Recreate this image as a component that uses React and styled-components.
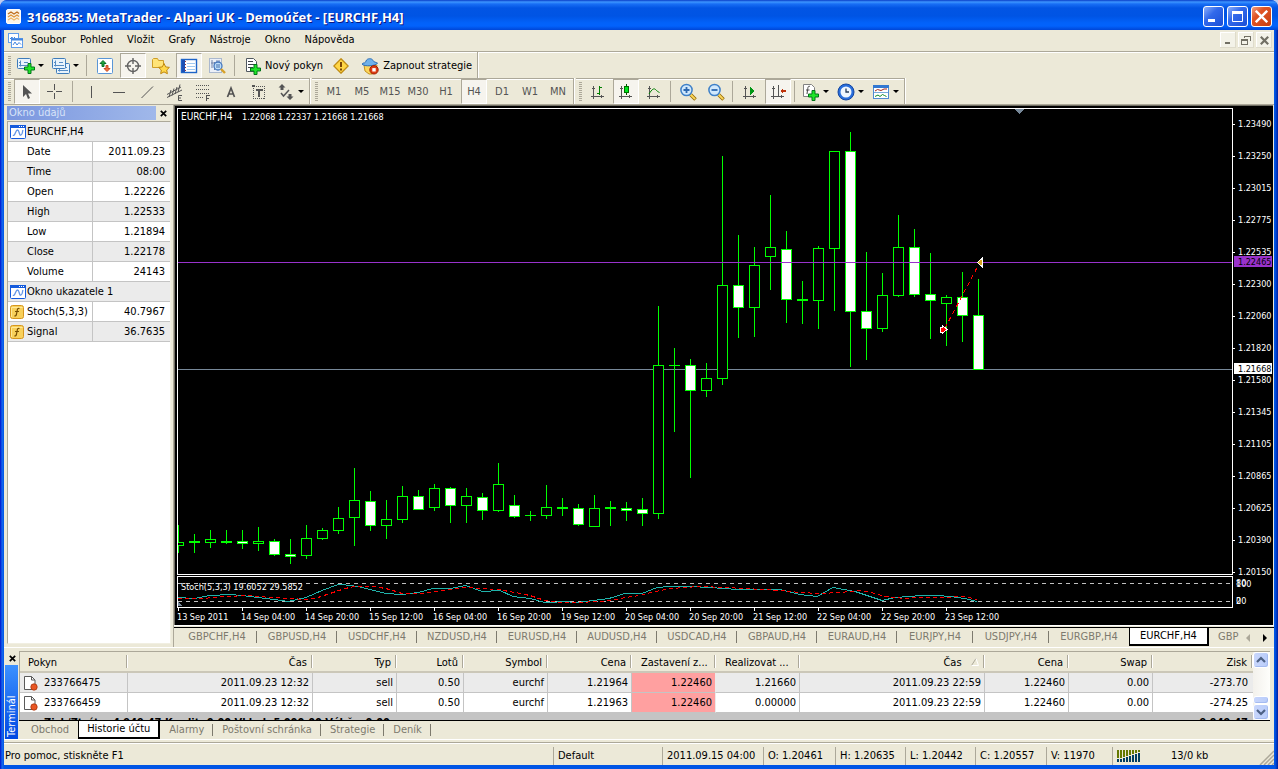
import React from 'react';
import styled, { createGlobalStyle, css } from 'styled-components';

const FONT = '"DejaVu Sans Condensed", "DejaVu Sans", "Noto Sans", sans-serif';
const FACE = 'rgb(236, 233, 216)';
const SHADOW = 'rgb(172, 168, 153)';
const DARK = 'rgb(113, 111, 100)';

const GlobalStyle = createGlobalStyle`
  * { box-sizing: border-box; }
  body { margin: 0; background: rgb(190, 204, 240); }
  button { font: inherit; color: inherit; padding: 0; margin: 0; border: 0; background: none; }
`;

// --- Window frame ---
const Window = styled.div`
  display: flex;
  flex-direction: column;
  height: 100vh;
  overflow: hidden;
  font: 11px/14px ${FONT};
  color: rgb(0, 0, 0);
  white-space: nowrap;
  background: linear-gradient(90deg, rgb(0, 25, 207) 0, rgb(8, 49, 217) 1px, rgb(22, 106, 238) 2px, rgb(0, 85, 229) 4px, rgb(0, 85, 229) calc(100% - 3px), rgb(0, 30, 160) 100%);
  border-radius: 7px 7px 0 0;
`;

const TitleBar = styled.header`
  display: flex;
  align-items: center;
  gap: 6px;
  flex: none;
  height: 30px;
  padding: 3px 6px 0;
  border-radius: 7px 7px 0 0;
  background: linear-gradient(180deg,
    rgb(9, 61, 200) 0, rgb(61, 149, 255) 2px, rgb(24, 110, 245) 4px, rgb(2, 85, 228) 8px,
    rgb(0, 84, 228) 16px, rgb(2, 98, 250) 23px, rgb(2, 98, 252) 26px, rgb(0, 70, 215) 30px);
`;

const Title = styled.h1`
  flex: 1;
  margin: 0;
  font: bold 13px/18px "Open Sans", ${FONT};
  color: rgb(255, 255, 255);
  text-shadow: 1px 1px 0 rgb(10, 24, 131);
`;

const CaptionButtons = styled.div`
  display: flex;
  gap: 3px;
`;

const CaptionButton = styled.button`
  display: grid;
  place-items: center;
  width: 21px;
  height: 21px;
  border: 1px solid rgb(255, 255, 255);
  border-radius: 3px;
  background: ${({ $close }) => $close
    ? 'linear-gradient(135deg, rgb(240, 160, 130) 0%, rgb(224, 84, 36) 35%, rgb(200, 62, 16) 100%)'
    : 'linear-gradient(135deg, rgb(140, 175, 250) 0%, rgb(50, 105, 235) 40%, rgb(26, 78, 214) 100%)'};
`;

const Client = styled.div`
  display: flex;
  flex-direction: column;
  flex: 1;
  min-height: 0;
  margin: 0 4px 4px;
  background: ${FACE};
`;

// --- Menu and toolbars ---
const MenuBar = styled.nav`
  display: flex;
  align-items: center;
  flex: none;
  gap: 14px;
  height: 22px;
  padding: 0 2px 1px 4px;
  border-bottom: 1px solid ${SHADOW};
  box-shadow: 0 1px 0 rgb(255, 255, 255);
  svg { margin-right: -6px; }
`;

const MdiButtons = styled.div`
  display: flex;
  gap: 2px;
  margin-left: auto;
`;

const MdiButton = styled.button`
  display: grid;
  place-items: center;
  width: 16px;
  height: 16px;
  background: rgb(243, 242, 232);
  box-shadow: inset -1px -1px 0 rgb(222, 219, 203), inset 1px 1px 0 rgb(255, 255, 255);
  svg { margin: 0; }
`;

const ToolRow = styled.div`
  display: flex;
  flex: none;
  height: ${({ $last }) => ($last ? '27px' : '26px')};
  border-bottom: ${({ $last }) => ($last ? `1px solid ${SHADOW}` : 0)};
`;

const Band = styled.div`
  display: flex;
  align-items: center;
  padding: 1px 1px 0 3px;
  border-right: 1px solid ${SHADOW};
  box-shadow: 1px 0 0 rgb(255, 255, 255);
  margin-right: 2px;
  &:first-child { padding-left: 4px; }
  ${({ $lined }) => $lined && css`
    padding-top: 0;
    border-top: 1px solid ${SHADOW};
    box-shadow: 1px 0 0 rgb(255, 255, 255), inset 0 1px 0 rgb(255, 255, 255);
  `}
`;

const Grip = styled.span`
  width: 3px;
  height: 19px;
  margin-right: 2px;
  background: repeating-linear-gradient(180deg, ${SHADOW} 0 1px, transparent 1px 2px);
`;

const Separator = styled.span`
  width: 1px;
  height: 21px;
  margin: ${({ $wide }) => ($wide ? '0 4px 0 3px' : '0 3px 0 2px')};
  background: ${SHADOW};
`;

const Tool = styled.button`
  display: flex;
  align-items: center;
  justify-content: ${({ $drop }) => ($drop ? 'flex-start' : 'center')};
  gap: 4px;
  height: 25px;
  width: ${({ $drop, $wide }) => ($wide ? 'auto' : $drop ? '35px' : '26px')};
  margin: ${({ $drop, $wide }) => ($drop || $wide ? '0' : '0 1px')};
  padding: ${({ $wide, $drop }) => ($wide ? '0 4px 0 6px' : $drop ? '0 0 0 4px' : '0')};
  color: ${({ $wide }) => ($wide ? 'rgb(0, 0, 0)' : 'rgb(84, 84, 84)')};
  ${({ $pressed }) => $pressed && css`
    border: 1px solid;
    border-color: ${SHADOW} rgb(255, 255, 255) rgb(255, 255, 255) ${SHADOW};
    background: rgb(246, 244, 238);
  `}
`;

const Caret = styled.span`
  border: 3px solid transparent;
  border-top-color: rgb(0, 0, 0);
  border-bottom: 0;
  margin-left: -1px;
`;

// --- Data window ---
const Main = styled.main`
  display: flex;
  flex: 1;
  min-height: 0;
`;

const DataWindow = styled.section`
  display: flex;
  flex-direction: column;
  flex: none;
  width: 170px;
  padding: 1px 2px 3px 3px;
  border-right: 1px solid ${SHADOW};
`;

const PaneTitle = styled.div`
  display: flex;
  align-items: center;
  height: 14px;
  margin-bottom: 1px;
  h2 {
    flex: 1;
    margin: 0;
    padding-left: 2px;
    font: 11px/14px ${FONT};
    color: rgb(216, 228, 248);
    background: linear-gradient(90deg, rgb(122, 150, 223), rgb(160, 184, 234));
  }
`;

const CloseButton = styled.button`
  display: grid;
  place-items: center;
  width: 15px;
  height: 14px;
`;

const DataList = styled.div`
  flex: 1;
  min-height: 0;
  background: rgb(255, 255, 255);
  border: 1px solid;
  border-color: ${SHADOW} rgb(241, 239, 226) rgb(241, 239, 226) ${SHADOW};
`;

const DataTable = styled.table`
  width: 100%;
  border-collapse: separate;
  border-spacing: 0;
  table-layout: fixed;
  tr { height: 20px; background: rgb(255, 255, 255); }
  tr.shade { background: rgb(235, 235, 235); }
  th, td { height: 20px; padding: 0; border-bottom: 1px solid rgb(196, 196, 196); font-weight: normal; }
  th { text-align: left; padding-left: 19px; border-right: 1px solid rgb(196, 196, 196); }
  td { text-align: right; padding-right: 5px; }
  th.iconed { padding-left: 2px; }
  th[colspan] { border-right: 0; }
`;

const Labelled = styled.span`
  display: flex;
  align-items: center;
  gap: ${({ $gap }) => $gap || 1}px;
`;

// --- Chart ---
const ChartColumn = styled.section`
  display: flex;
  flex-direction: column;
  flex: 1;
  min-width: 0;
`;

const ChartArea = styled.div`
  display: grid;
  grid-template-columns: minmax(0, 1fr) 40px;
  grid-template-rows: minmax(0, 1fr) 32px 16px;
  flex: 1;
  min-height: 0;
  margin-right: 1px;
  padding: 2px 0 0 2px;
  row-gap: 1px;
  background: rgb(0, 0, 0);
  border-top: 1px solid ${DARK};
  border-left: 1px solid ${DARK};
  svg { display: block; width: 100%; height: 100%; overflow: hidden; }
  text { font: 9px ${FONT}; fill: rgb(255, 255, 255); }
  text.symbol { font-size: 10px; }
  text.badge { fill: rgb(0, 0, 0); }
`;

const Pane = styled.div`
  min-width: 0;
  min-height: 0;
  border: 1px solid rgb(255, 255, 255);
`;

const AxisCell = styled.div`
  min-width: 0;
  min-height: 0;
  grid-column: ${({ $span }) => ($span ? '1 / 3' : 'auto')};
  && svg { overflow: visible; }
`;

const TabStrip = styled.div`
  display: flex;
  flex: none;
  height: 19px;
  padding-left: 3px;
  border-top: 1px solid rgb(0, 0, 0);
  overflow: hidden;
`;

const ChartTabs = styled.div`
  display: flex;
  flex: none;
  height: 22px;
  padding-top: 1px;
  border-top: 1px solid rgb(255, 255, 255);
  background: ${FACE};
  ${TabStrip} { flex: 1; height: 20px; }
`;

const Tab = styled.button`
  position: relative;
  flex: none;
  width: ${({ $w }) => ($w ? `${$w}px` : 'auto')};
  height: 18px;
  padding: ${({ $w }) => ($w ? '0' : '0 9px')};
  color: rgb(125, 122, 110);
  ${({ $active, $line }) => !$active && $line && css`
    &::after {
      content: '';
      position: absolute;
      right: 0;
      top: 3px;
      width: 1px;
      height: 12px;
      background: rgb(125, 122, 110);
    }
  `}
  ${({ $active, $w }) => $active && css`
    color: rgb(0, 0, 0);
    padding: ${$w ? '0' : '0 8px'};
    background: rgb(255, 255, 255);
    border: 1px solid rgb(0, 0, 0);
    border-top: 0;
    border-right-width: 2px;
    border-bottom-width: 2px;
  `}
`;

const TabScroll = styled.div`
  display: flex;
  align-items: center;
  gap: 12px;
  width: 32px;
  padding-left: 4px;
  border-top: 1px solid rgb(0, 0, 0);
  button { display: flex; width: 5px; }
`;

// --- Terminal ---
const Terminal = styled.section`
  display: flex;
  flex: none;
  height: 96px;
  padding: 3px 4px 3px 0;
  border-top: 1px solid rgb(255, 255, 255);
  border-bottom: 1px solid ${SHADOW};
  box-shadow: inset 0 -2px 0 ${FACE}, inset 0 -3px 0 rgb(255, 255, 255);
`;

const SideStrip = styled.div`
  display: flex;
  flex-direction: column;
  width: 15px;
  padding-left: 1px;
  h2 {
    flex: 1;
    margin: 0;
    width: 13px;
    padding-top: 2px;
    font: 11px/13px ${FONT};
    color: rgb(255, 255, 255);
    writing-mode: vertical-rl;
    transform: rotate(180deg);
    background: linear-gradient(0deg, rgb(60, 145, 255), rgb(0, 72, 226));
  }
`;

const TerminalBody = styled.div`
  display: flex;
  flex-direction: column;
  flex: 1;
  min-width: 0;
`;

const ListRow = styled.div`
  display: flex;
  flex: 1;
  min-height: 0;
  overflow: hidden;
  border-top: 1px solid ${SHADOW};
  border-left: 1px solid ${SHADOW};
`;

const TableClip = styled.div`
  flex: 1;
  min-width: 0;
  overflow: hidden;
`;

const OrderTable = styled.table`
  width: 100%;
  table-layout: fixed;
  border-collapse: separate;
  border-spacing: 0;
  th, td { font-weight: normal; text-align: right; padding: 0 3px 0 0; overflow: hidden; }
  th {
    height: 21px;
    padding: 2px 6px 0 0;
    border-bottom: 2px solid rgb(203, 199, 184);
    background: linear-gradient(${SHADOW}, ${SHADOW}) right 1px top 3px / 1px 13px no-repeat,
      linear-gradient(white, white) right 0 top 3px / 1px 13px no-repeat, ${FACE};
  }
  td { height: 20px; border-bottom: 1px solid rgb(196, 196, 196); border-right: 1px solid rgb(196, 196, 196); }
  th:first-child { text-align: left; padding-left: 8px; }
  th.clipped { text-align: left; padding: 2px 0 0 9px; }
  td:first-child { text-align: left; padding-left: 3px; }
  td:last-child { border-right: 0; padding-right: 5px; }
  tbody tr td { background: rgb(255, 255, 255); }
  tbody tr.shade td { background: rgb(235, 235, 235); }
  tbody tr td.stop { background: rgb(255, 160, 160); border-right-color: rgb(235, 235, 235); }
  tbody tr.total td { background: rgb(196, 196, 196); font-weight: bold; border-right: 0; }
`;

const ScrollBar = styled.div`
  display: flex;
  flex-direction: column;
  width: 17px;
  padding-right: 1px;
  background: linear-gradient(90deg, rgb(243, 241, 236), rgb(254, 254, 251));
`;

const ScrollButton = styled.button`
  display: grid;
  place-items: center;
  flex: none;
  height: ${({ $thumb }) => ($thumb ? '8px' : '16px')};
  margin-top: ${({ $push }) => ($push ? 'auto' : '0')};
  border: 1px solid rgb(255, 255, 255);
  border-radius: 3px;
  background: linear-gradient(90deg, rgb(200, 214, 251), rgb(185, 204, 250));
  box-shadow: inset -1px -1px 0 rgb(165, 187, 240);
`;

const StatusBar = styled.footer`
  display: grid;
  grid-template-columns: minmax(0, 1fr) 109px 101px 72px 70px 70px 71px 66px 162px;
  flex: none;
  height: 22px;
  padding-top: 3px;
  border-top: 1px solid rgb(255, 255, 255);
`;

const StatusCell = styled.div`
  display: flex;
  align-items: center;
  gap: 31px;
  height: 18px;
  padding-left: ${({ $first }) => ($first ? '1px' : '4px')};
  border-left: ${({ $first }) => ($first ? '0' : `1px solid ${SHADOW}`)};
  overflow: hidden;
  svg:last-child:not(:first-child) { margin-left: auto; align-self: flex-end; }
`;

// --- Icons ---
const Svg = ({ w = 18, h = 18, crisp, children }) => (
  <svg width={w} height={h} viewBox={`0 0 ${w} ${h}`} fill="none" shapeRendering={crisp ? 'crispEdges' : undefined} aria-hidden="true">
    {children}
  </svg>
);

const Plus = ({ x, y }) => (
  <path transform={`translate(${x} ${y})`} d="M4 .5h3V4h3.500v3H7v3.500H4V7H.5V4H4z" fill="rgb(30, 230, 40)" stroke="rgb(0, 118, 24)" />
);

const AppIcon = () => (
  <Svg w={15} h={15}>
    <rect x=".5" y=".5" width="14" height="14" rx="1.5" fill="rgb(250, 244, 232)" stroke="rgb(255, 255, 255)" />
    {[4, 7, 10].map((y, i) => (
      <path key={y} d={`M2 ${y + 1}l3-2 3 2 3-2 2 1.500`} stroke={['rgb(190, 110, 30)', 'rgb(222, 150, 60)', 'rgb(236, 184, 110)'][i]} strokeWidth="1.400" />
    ))}
  </Svg>
);

const MdiIcon = () => (
  <Svg w={15} h={15}>
    <rect x=".5" y=".5" width="10" height="9" fill="white" stroke="rgb(96, 156, 234)" />
    <path d="M2 6l2-2 1 2 2-2" stroke="rgb(66, 133, 224)" />
    <rect x="3.500" y="5.500" width="11" height="9" fill="white" stroke="rgb(96, 156, 234)" />
    <path d="M3 6.500h12" stroke="rgb(66, 133, 224)" strokeWidth="2" />
    <path d="M5 12l2-3 2 3 2-2.500 2 2" stroke="rgb(66, 133, 224)" />
  </Svg>
);

const WindowIcon = () => (
  <Svg w={16} h={14}>
    <rect x=".5" y=".5" width="15" height="13" rx="1" fill="white" stroke="rgb(20, 90, 220)" />
    <path d="M0 1.500h16" stroke="rgb(20, 90, 220)" strokeWidth="3" />
    <path d="M9 1.500h1m1 0h1m1 0h1" stroke="white" />
    <path d="M3 10c2 2 2.500-5 4.500-5s1.500 6 3.500 5 1-3 2-5" stroke="rgb(100, 150, 230)" strokeWidth="1.300" />
  </Svg>
);

const FunctionIcon = () => (
  <Svg w={14} h={14}>
    <rect x=".5" y=".5" width="13" height="13" rx="2" fill="rgb(248, 208, 90)" stroke="rgb(214, 150, 30)" />
    <path d="M1.500 12V2.500h11" stroke="rgb(255, 232, 150)" />
    <path d="M9.500 3.500c-1.500-.7-2 .3-2.300 2l-.8 4c-.3 1.300-.9 1.700-2 1.200M5 6.500h4" stroke="rgb(120, 78, 0)" strokeWidth="1.200" />
  </Svg>
);

const ChartFrame = ({ x = 0, y = 0 }) => (
  <g transform={`translate(${x} ${y})`}>
    <rect x=".5" y=".5" width="13" height="10" rx="1" fill="rgb(232, 243, 252)" stroke="rgb(62, 124, 186)" />
    <path d="M3.500 2.500v6M2 4.500h2m-2 3h10M7 4.500h4" stroke="rgb(86, 140, 196)" />
  </g>
);

const NewChartIcon = () => <Svg><ChartFrame x={0} y={1} /><Plus x={7} y={6} /></Svg>;
const ProfilesIcon = () => <Svg><ChartFrame x={4} y={6} /><ChartFrame x={0} y={1} /></Svg>;

const MarketWatchIcon = () => (
  <Svg>
    <rect x="1.500" y="1.500" width="15" height="15" rx="1" fill="white" stroke="rgb(90, 150, 214)" />
    <path d="M7 3.500l3 3h-2v3h-2v-3h-2z" fill="rgb(30, 165, 60)" stroke="rgb(10, 110, 40)" />
    <path d="M11 14.500l-3-3h2v-3h2v3h2z" fill="rgb(240, 110, 60)" stroke="rgb(200, 76, 36)" />
  </Svg>
);

const CrosshairIcon = () => (
  <Svg>
    <circle cx="9" cy="9" r="5.500" stroke="rgb(98, 98, 98)" strokeWidth="1.400" />
    <path d="M9 1v6M9 11v6M1 9h6M11 9h6" stroke="rgb(98, 98, 98)" strokeWidth="1.400" />
  </Svg>
);

const Star = () => (
  <path d="M12 6.500l1.700 3.400 3.700.5-2.700 2.600.7 3.700-3.400-1.800-3.300 1.800.6-3.700-2.700-2.600 3.700-.5z" fill="rgb(255, 216, 74)" stroke="rgb(190, 134, 14)" />
);
const NavigatorIcon = () => (
  <Svg>
    <path d="M.5 10.500V2.500l1-1h4l1 2h5v7z" fill="rgb(255, 228, 120)" stroke="rgb(206, 158, 40)" />
    <Star />
  </Svg>
);

const DataWindowIcon = () => (
  <Svg>
    <rect x="1.500" y="2.500" width="15" height="13" fill="white" stroke="rgb(30, 100, 200)" strokeWidth="1.400" />
    <path d="M3.500 3v12" stroke="rgb(30, 80, 180)" strokeWidth="3" />
    <path d="M7 6.500h8M7 9.500h8M7 12.500h8" stroke="rgb(160, 200, 240)" />
    <path d="M5.500 4v10" stroke="rgb(150, 50, 60)" strokeDasharray="1 2" />
  </Svg>
);

const TesterIcon = () => (
  <Svg>
    <rect x="1.500" y="1.500" width="12" height="14" fill="rgb(236, 240, 248)" stroke="rgb(170, 184, 206)" />
    <path d="M4 3v8M6.500 5v8M3 6h3m2-2h4" stroke="rgb(110, 130, 170)" />
    <circle cx="10" cy="9" r="4" fill="rgb(190, 222, 250)" stroke="rgb(70, 120, 190)" strokeWidth="1.300" />
    <path d="M9 7v4M11 7v4" stroke="rgb(70, 110, 170)" />
    <path d="M13 12l4 4" stroke="rgb(214, 160, 40)" strokeWidth="2.400" />
  </Svg>
);

const NewOrderIcon = () => (
  <Svg w={16}>
    <path d="M1.500 1.500h7l3 3v10h-10z" fill="white" stroke="rgb(80, 88, 96)" />
    <path d="M3 4.500h5M3 7.500h7M3 10.500h5" stroke="rgb(60, 66, 74)" />
    <Plus x={5} y={7} />
  </Svg>
);

const AlertIcon = () => (
  <Svg w={16} h={16}>
    <path d="M8 .8L15.200 8 8 15.200.8 8z" fill="rgb(255, 214, 70)" stroke="rgb(192, 140, 20)" strokeWidth="1.300" />
    <path d="M8 4v5M8 10.500v2" stroke="rgb(110, 56, 0)" strokeWidth="1.800" />
  </Svg>
);

const ExpertIcon = () => (
  <Svg>
    <path d="M3 8l1 6 4 3h3l4-3 1-6z" fill="rgb(252, 214, 92)" stroke="rgb(196, 146, 30)" />
    <path d="M1 7c2-2 3 0 4-3s6-3 7-.5c.8 2 3 1.500 4.500 2.500-1 3-13.500 4-15.500 1z" fill="rgb(110, 176, 234)" stroke="rgb(44, 110, 184)" />
    <circle cx="13" cy="12.800" r="4.200" fill="rgb(222, 60, 20)" stroke="rgb(160, 30, 0)" />
    <rect x="11.300" y="11.100" width="3.400" height="3.400" fill="white" />
  </Svg>
);

const INK = 'rgb(84, 84, 84)';
const CursorIcon = () => <Svg><path d="M5 2v12l3-3 2 5 2-1-2-4.500h4z" fill={INK} /></Svg>;
const CrossIcon = () => <Svg crisp><path d="M8.500 1v6m0 3v6M1 8.500h6m3 0h6" stroke={INK} /></Svg>;
const VLineIcon = () => <Svg crisp><path d="M9.500 3v12" stroke={INK} /></Svg>;
const HLineIcon = () => <Svg crisp><path d="M3 9.500h12" stroke={INK} /></Svg>;
const TrendIcon = () => <Svg><path d="M3.500 15L15 3.500" stroke={INK} /></Svg>;
const ChannelIcon = () => (
  <Svg>
    <path d="M1 11.500L15 4M1 14.500L16 7M5 7l-2 7M8 5.500l-2 7M11 4l-2 7M14 1.500l-2 7.500" stroke={INK} />
    <path d="M16 12.500h-3.500v5H16M12.500 15H15" stroke={INK} />
  </Svg>
);
const FiboIcon = () => (
  <Svg crisp>
    <path d="M2 2.500h14M2 6.500h14M2 10.500h14M2 14.500h8" stroke={INK} strokeDasharray="1 1" />
    <path d="M16 12.500h-3.500V18M13 15.500h2" stroke={INK} />
  </Svg>
);
const LetterIcon = () => <Svg><path d="M5.500 14L9 5l3.500 9M6.500 11h5" stroke={INK} strokeWidth="1.700" /></Svg>;
const TextBoxIcon = () => (
  <Svg crisp>
    <rect x="3.500" y="3.500" width="11" height="12" stroke={INK} strokeDasharray="1 1" />
    <path d="M6 7h7M9 6v8" stroke={INK} strokeWidth="2" />
    <path d="M2 2h3v2H2z" fill={INK} />
  </Svg>
);
const ArrowsIcon = () => (
  <Svg>
    <path d="M5 1l3.500 3.500H6.500V7h-3V4.500H1.500zM13 17l-3.500-3.500h2V11h3v2.500h2z" fill={INK} />
    <path d="M4 10l2.500 3L12 7" stroke={INK} strokeWidth="1.500" />
  </Svg>
);

const Axes = () => <path d="M4.500 3v13M2 13.500h13M3 5.500h3M12.500 12v3" stroke={INK} />;
const BarsIcon = () => <Svg crisp><Axes /><path d="M10.500 3v9M8 10.500h2M11 4.500h2" stroke="rgb(0, 128, 0)" /></Svg>;
const CandlesIcon = () => (
  <Svg crisp><Axes /><path d="M9.500 1v11" stroke="rgb(0, 90, 0)" /><rect x="7.500" y="3.500" width="4" height="6" fill="rgb(0, 230, 30)" stroke="rgb(0, 110, 0)" /></Svg>
);
const LineIcon = () => <Svg><Axes /><path d="M4 11c3-5 5-6 6.500-4.500s2 2 4 3" stroke="rgb(0, 128, 0)" /></Svg>;
const ZoomIcon = ({ minus }) => (
  <Svg>
    <path d="M11.500 11.500l5 5" stroke="rgb(150, 104, 0)" strokeWidth="3.600" />
    <path d="M11.500 11.500l4.600 4.600" stroke="rgb(250, 214, 90)" strokeWidth="2" />
    <circle cx="7.500" cy="7" r="5.600" fill="rgb(208, 232, 252)" stroke="rgb(62, 128, 200)" strokeWidth="1.500" />
    <path d={minus ? 'M4.500 7h6' : 'M4.500 7h6M7.500 4v6'} stroke="rgb(44, 104, 176)" strokeWidth="1.800" />
  </Svg>
);
const ScrollChartIcon = () => <Svg crisp><Axes /><path d="M9 4l4 4-4 4z" fill="rgb(0, 150, 20)" /></Svg>;
const ShiftIcon = () => (
  <Svg crisp><Axes /><path d="M9.500 2v11" stroke={INK} /><path d="M11 8l3-3v2h3v2h-3v2z" fill="rgb(190, 50, 10)" /></Svg>
);
const IndicatorsIcon = () => (
  <Svg>
    <path d="M1.500 1.500h8l3 3v9h-11z" fill="white" stroke="rgb(130, 130, 130)" />
    <path d="M8 3.500c-2-1-2 1-2.400 3L5 11M4 7h3.500" stroke="rgb(70, 70, 70)" />
    <Plus x={6} y={7} />
  </Svg>
);
const ClockIcon = () => (
  <Svg>
    <circle cx="9" cy="9" r="8" fill="rgb(40, 110, 220)" stroke="rgb(20, 70, 160)" />
    <circle cx="9" cy="9" r="5.500" fill="rgb(238, 246, 255)" />
    <path d="M9 5.500V9h3" stroke="rgb(40, 60, 90)" strokeWidth="1.300" />
  </Svg>
);
const TemplateIcon = () => (
  <Svg>
    <rect x="1.500" y="2.500" width="15" height="13" fill="white" stroke="rgb(80, 140, 210)" />
    <path d="M1 3.500h16" stroke="rgb(50, 120, 210)" strokeWidth="3" />
    <path d="M2 9.500h14" stroke="rgb(120, 170, 220)" />
    <path d="M3 8l2.500-1.500L9 7.500l3-1.500h3" stroke="rgb(160, 40, 30)" />
    <path d="M3 13.500l3-1.500 2 1.500 2.500-2 2 1 2 1" stroke="rgb(20, 140, 40)" />
  </Svg>
);

const CrossMark = ({ size = 7, color = 'rgb(0, 0, 0)', weight = 1.7 }) => (
  <Svg w={size} h={size}><path d={`M.8.8L${size - 0.8} ${size - 0.8}M${size - 0.8}.8L.8 ${size - 0.8}`} stroke={color} strokeWidth={weight} /></Svg>
);
const OrderIcon = () => (
  <Svg w={15} h={16}>
    <path d="M1.500 1.500h7l3.500 3.500v9.500h-10.500z" fill="white" stroke="rgb(90, 90, 90)" />
    <path d="M8.500 1.500v3.500h3.500" stroke="rgb(90, 90, 90)" />
    <circle cx="11" cy="12" r="3.200" fill="rgb(232, 86, 36)" stroke="rgb(170, 50, 10)" strokeWidth=".8" />
  </Svg>
);
const Chevron = ({ down }) => <Svg w={10} h={8}><path d={down ? 'M1 2l4 4 4-4' : 'M1 6l4-4 4 4'} stroke="rgb(77, 97, 133)" strokeWidth="2.200" /></Svg>;
const ConnectionIcon = () => (
  <Svg w={23} h={12} crisp>
    {[0, 1, 2, 3, 4, 5, 6, 7].map((i) => (
      <React.Fragment key={i}>
        <rect x={i * 3} y="0" width="2" height={i < 2 ? 8 : 9 - i} fill="rgb(100, 120, 0)" />
        <rect x={i * 3} y={i < 2 ? 9 : 10 - i} width="2" height={i < 2 ? 3 : 2 + i} fill="rgb(0, 62, 98)" />
      </React.Fragment>
    ))}
  </Svg>
);
const SizeGrip = () => <Svg w={15} h={15}><path d="M1 15L15 1M5 15L15 5M9 15l6-6M13 15l2-2" stroke={SHADOW} strokeWidth="1.500" /></Svg>;

// --- Chart data: wick top, body top, body bottom, wick bottom, bearish ---
const STEP = 16;
const PLOT_TOP = 109;
const STOCH_TOP = 577;
const LEFT = 178;

const CANDLES = [
  [525, 542, 545, 553, 0], [534, 541, 542, 553, 0], [530, 539, 542, 548, 0], [530, 541, 542, 544, 0],
  [530, 541, 543, 549, 1], [527, 541, 543, 551, 0], [539, 541, 554, 556, 1], [539, 554, 556, 564, 1],
  [525, 538, 555, 559, 0], [528, 530, 538, 540, 0], [507, 518, 530, 534, 0], [468, 500, 517, 546, 0],
  [491, 501, 525, 531, 1], [500, 519, 525, 539, 0], [486, 496, 519, 523, 0], [490, 496, 509, 510, 1],
  [484, 488, 507, 511, 0], [487, 488, 505, 523, 1], [488, 496, 505, 523, 0], [493, 497, 510, 520, 1],
  [463, 484, 510, 512, 0], [495, 505, 516, 518, 1], [511, 515, 515, 521, 0], [485, 507, 515, 519, 0],
  [498, 507, 508, 516, 0], [504, 508, 524, 526, 1], [495, 508, 526, 527, 0], [501, 507, 508, 526, 0],
  [502, 508, 510, 521, 1], [498, 509, 513, 526, 1], [306, 365, 513, 519, 0], [348, 365, 365, 432, 0],
  [359, 365, 390, 478, 1], [363, 378, 390, 397, 0], [156, 285, 378, 385, 0], [235, 285, 307, 338, 1],
  [247, 265, 307, 337, 0], [195, 247, 256, 290, 0], [231, 249, 299, 323, 1], [281, 299, 300, 324, 0],
  [246, 248, 300, 329, 0], [151, 151, 248, 311, 0], [132, 151, 311, 367, 1], [252, 311, 328, 360, 1],
  [273, 295, 328, 332, 0], [215, 247, 295, 297, 0], [229, 247, 294, 297, 1], [253, 294, 300, 339, 1],
  [295, 297, 303, 346, 0], [272, 297, 315, 342, 1], [279, 315, 369, 370, 1],
];

const STOCH_MAIN = '178,597 194,598 210,595 230,594 242,595 258,597 274,599 288,601 306,597 322,590 338,584 342,584 358,586 374,590 386,593 402,594 418,592 433,588 450,588 466,585 482,591 500,590 513,596 530,598 545,602 552,602 562,601 577,602 593,600 609,598 625,593 642,593 657,587 670,586 690,586 710,587 738,589 780,589 792,592 800,594 817,596 833,587 855,591 870,596 882,600 895,597 922,595 938,595 950,596 965,598 977,601';
const STOCH_SIGNAL = '178,598 202,598 225,596 250,595 270,597 290,598 306,599 318,597 330,593 345,588 355,586 375,586 390,589 402,593 420,593 435,591 450,589 466,587 482,588 498,589 515,592 530,595 545,600 560,602 580,602 596,601 612,600 625,597 640,595 655,591 672,588 685,587 700,586 725,587 745,588 780,590 800,592 820,593 840,592 862,590 875,593 885,596 905,598 918,597 940,597 965,596 977,599';

const PRICES = ['1.23490', '1.23250', '1.23015', '1.22775', '1.22535', '1.22300', '1.22060', '1.21820', '1.21580', '1.21345', '1.21105', '1.20865', '1.20625', '1.20390', '1.20150'];
const TIMES = ['13 Sep 2011', '14 Sep 04:00', '14 Sep 20:00', '15 Sep 12:00', '16 Sep 04:00', '16 Sep 20:00', '19 Sep 12:00', '20 Sep 04:00', '20 Sep 20:00', '21 Sep 12:00', '22 Sep 04:00', '22 Sep 20:00', '23 Sep 12:00'];

const Candle = ({ index, data: [high, top, bottom, low, bearish] }) => {
  const x = LEFT + index * STEP;
  return (
    <g>
      <rect x={x} y={high} width="1" height={low - high} fill="rgb(0, 255, 0)" />
      <rect x={x - 5} y={top} width="11" height={bottom - top + 1} fill="rgb(0, 255, 0)" />
      {bottom - top > 1 && (
        <rect x={x - 4} y={top + 1} width="9" height={bottom - top - 1} fill={bearish ? 'rgb(255, 255, 255)' : 'rgb(0, 0, 0)'} />
      )}
    </g>
  );
};

const PricePlot = () => (
  <svg>
    <g transform={`translate(${-LEFT} ${-PLOT_TOP})`} shapeRendering="crispEdges">
      <line x1={LEFT} x2="200%" y1="369.500" y2="369.500" stroke="rgb(119, 136, 153)" />
      {CANDLES.map((c, i) => <Candle key={i} index={i} data={c} />)}
      <line x1={LEFT} x2="200%" y1="262.500" y2="262.500" stroke="rgb(153, 50, 204)" />
      <path d="M945 328L979 264" stroke="rgb(255, 0, 0)" strokeDasharray="4 4" />
      <path d="M940 327h2v-2l5 4.500-5 4.500v-2h-2z" fill="rgb(255, 0, 0)" stroke="rgb(255, 255, 255)" />
      <path d="M982.500 258v9l-5-4.500z" fill="rgb(218, 165, 32)" stroke="rgb(255, 255, 255)" />
      <path d="M1014 109h11l-5.500 5z" fill="rgb(119, 136, 153)" />
    </g>
    <text className="symbol" x="3" y="11">EURCHF,H4</text>
    <text x="64" y="11">1.22068 1.22337 1.21668 1.21668</text>
  </svg>
);

const PriceAxis = () => (
  <svg>
    {PRICES.map((p, i) => (
      <g key={p}>
        <rect x="0" y={16 + i * 32} width="2" height="1" fill="rgb(255, 255, 255)" />
        <text x="5" y={19 + i * 32}>{p}</text>
      </g>
    ))}
    <rect x="1" y="148" width="38" height="11" fill="rgb(153, 50, 204)" />
    <text className="badge" x="5" y="157">1.22465</text>
    <rect x="1" y="255" width="38" height="11" fill="rgb(255, 255, 255)" />
    <text className="badge" x="5" y="264">1.21668</text>
  </svg>
);

const StochPlot = () => (
  <svg>
    <g transform={`translate(${-LEFT} ${-STOCH_TOP})`} shapeRendering="crispEdges">
      {[583.5, 601.5].map((y) => (
        <line key={y} x1={LEFT} x2="200%" y1={y} y2={y} stroke="rgb(192, 192, 192)" strokeDasharray="4 4" />
      ))}
      <polyline points={STOCH_MAIN} transform="translate(0 .5)" fill="none" stroke="rgb(32, 178, 170)" />
      <polyline points={STOCH_SIGNAL} transform="translate(0 .5)" fill="none" stroke="rgb(255, 0, 0)" strokeDasharray="4 3" />
      <path d="M178 602v4h4z" fill="rgb(119, 136, 153)" />
    </g>
    <text x="3" y="13">Stoch(5,3,3) 19.6052 29.5852</text>
  </svg>
);

const StochAxis = () => (
  <svg>
    <text x="3" y="11">100</text>
    <text x="3" y="10">80</text>
    <text x="3" y="28">20</text>
    <text x="3" y="28">0</text>
  </svg>
);

const TimeAxis = () => (
  <svg>
    {TIMES.map((t, i) => (
      <g key={t}>
        <rect x={1 + i * 64} y="-1" width="1" height="3" fill="rgb(255, 255, 255)" />
        <text x={i * 64} y="11">{t}</text>
      </g>
    ))}
  </svg>
);

// --- Content ---
const MENU = ['Soubor', 'Pohled', 'Vložit', 'Grafy', 'Nástroje', 'Okno', 'Nápověda'];
const PERIODS = ['M1', 'M5', 'M15', 'M30', 'H1', 'H4', 'D1', 'W1', 'MN'];
const DATA = [['Date', '2011.09.23'], ['Time', '08:00'], ['Open', '1.22226'], ['High', '1.22533'], ['Low', '1.21894'], ['Close', '1.22178'], ['Volume', '24143']];
const CHARTS = ['GBPCHF', 'GBPUSD', 'USDCHF', 'NZDUSD', 'EURUSD', 'AUDUSD', 'USDCAD', 'GBPAUD', 'EURAUD', 'EURJPY', 'USDJPY', 'EURGBP', 'EURCHF'];
const COLUMNS = [['Pokyn', 108], ['Čas', 185], ['Typ', 84], ['Lotů', 67], ['Symbol', 84], ['Cena', 84], ['Zastavení z...', 84], ['Realizovat ...', 84], ['Čas', 185], ['Cena', 84], ['Swap', 84], ['Zisk']];
const ORDERS = [
  ['233766475', '2011.09.23 12:32', 'sell', '0.50', 'eurchf', '1.21964', '1.22460', '1.21660', '2011.09.23 22:59', '1.22460', '0.00', '-273.70'],
  ['233766459', '2011.09.23 12:32', 'sell', '0.50', 'eurchf', '1.21963', '1.22460', '0.00000', '2011.09.23 22:59', '1.22460', '0.00', '-274.25'],
];
const TERMINAL_TABS = ['Obchod', 'Historie účtu', 'Alarmy', 'Poštovní schránka', 'Strategie', 'Deník'];
const STATUS = ['Default', '2011.09.15 04:00', 'O: 1.20461', 'H: 1.20635', 'L: 1.20442', 'C: 1.20557', 'V: 11970'];

const SortMark = () => (
  <Svg w={8} h={8}>
    <path d="M.5 7.500L5 .5" stroke={SHADOW} />
    <path d="M5 .5l2.500 7H.5" stroke="white" />
  </Svg>
);

const App = () => (
  <>
    <GlobalStyle />
    <Window>
      <TitleBar>
        <AppIcon />
        <Title>3166835: MetaTrader - Alpari UK - Demoúčet - [EURCHF,H4]</Title>
        <CaptionButtons>
          <CaptionButton aria-label="Minimize"><Svg w={13} h={13}><path d="M1 10.500h7" stroke="white" strokeWidth="3" /></Svg></CaptionButton>
          <CaptionButton aria-label="Maximize"><Svg w={13} h={13}><path d="M1.500 2v9.500h10V2" stroke="white" /><path d="M1 2.500h11" stroke="white" strokeWidth="3" /></Svg></CaptionButton>
          <CaptionButton aria-label="Close" $close><CrossMark size={13} color="white" weight={2.4} /></CaptionButton>
        </CaptionButtons>
      </TitleBar>

      <Client>
        <MenuBar>
          <MdiIcon />
          {MENU.map((m) => <button key={m}>{m}</button>)}
          <MdiButtons>
            <MdiButton aria-label="Minimize chart"><Svg w={10} h={10} crisp><path d="M2 8h5" stroke={DARK} strokeWidth="2" /></Svg></MdiButton>
            <MdiButton aria-label="Restore chart"><Svg w={10} h={10} crisp><path d="M3 1.500h6.500V6M3 2v1M.5 4.500h6v5h-6zM0 5.500h7" stroke={DARK} /></Svg></MdiButton>
            <MdiButton aria-label="Close chart"><CrossMark size={9} color={DARK} weight={2.2} /></MdiButton>
          </MdiButtons>
        </MenuBar>

        <ToolRow>
          <Band>
            <Grip />
            <Tool $drop aria-label="New chart"><NewChartIcon /><Caret /></Tool>
            <Tool $drop aria-label="Profiles"><ProfilesIcon /><Caret /></Tool>
            <Separator $wide />
            <Tool aria-label="Market watch"><MarketWatchIcon /></Tool>
            <Tool $pressed aria-label="Crosshair"><CrosshairIcon /></Tool>
            <Tool aria-label="Navigator"><NavigatorIcon /></Tool>
            <Tool $pressed aria-label="Data window"><DataWindowIcon /></Tool>
            <Tool aria-label="Strategy tester"><TesterIcon /></Tool>
            <Separator $wide />
            <Tool $wide><NewOrderIcon />Nový pokyn</Tool>
            <Tool aria-label="Alert"><AlertIcon /></Tool>
            <Tool $wide><ExpertIcon />Zapnout strategie</Tool>
          </Band>
        </ToolRow>

        <ToolRow $last>
          <Band $lined>
            <Grip />
            <Tool $pressed aria-label="Cursor"><CursorIcon /></Tool>
            <Tool aria-label="Cross"><CrossIcon /></Tool>
            <Separator $wide />
            <Tool aria-label="Vertical line"><VLineIcon /></Tool>
            <Tool aria-label="Horizontal line"><HLineIcon /></Tool>
            <Tool aria-label="Trend line"><TrendIcon /></Tool>
            <Tool aria-label="Channel"><ChannelIcon /></Tool>
            <Tool aria-label="Fibonacci"><FiboIcon /></Tool>
            <Tool aria-label="Text"><LetterIcon /></Tool>
            <Tool aria-label="Text label"><TextBoxIcon /></Tool>
            <Tool $drop aria-label="Arrows"><ArrowsIcon /><Caret /></Tool>
          </Band>
          <Band $lined>
            <Grip />
            {PERIODS.map((p) => <Tool key={p} $pressed={p === 'H4'}>{p}</Tool>)}
          </Band>
          <Band $lined>
            <Grip />
            <Tool aria-label="Bars"><BarsIcon /></Tool>
            <Tool $pressed aria-label="Candles"><CandlesIcon /></Tool>
            <Tool aria-label="Line"><LineIcon /></Tool>
            <Separator />
            <Tool aria-label="Zoom in"><ZoomIcon /></Tool>
            <Tool aria-label="Zoom out"><ZoomIcon minus /></Tool>
            <Separator />
            <Tool aria-label="Auto scroll"><ScrollChartIcon /></Tool>
            <Tool $pressed aria-label="Chart shift"><ShiftIcon /></Tool>
            <Separator />
            <Tool $drop aria-label="Indicators"><IndicatorsIcon /><Caret /></Tool>
            <Tool $drop aria-label="Periods"><ClockIcon /><Caret /></Tool>
            <Tool $drop aria-label="Templates"><TemplateIcon /><Caret /></Tool>
          </Band>
        </ToolRow>

        <Main>
          <DataWindow>
            <PaneTitle>
              <h2>Okno údajů</h2>
              <CloseButton aria-label="Close data window"><CrossMark /></CloseButton>
            </PaneTitle>
            <DataList>
              <DataTable>
                <colgroup><col width="85" /><col /></colgroup>
                <tbody>
                  <tr className="shade"><th colSpan="2" className="iconed"><Labelled><WindowIcon />EURCHF,H4</Labelled></th></tr>
                  {DATA.map(([k, v], i) => (
                    <tr key={k} className={i % 2 ? 'shade' : ''}><th>{k}</th><td>{v}</td></tr>
                  ))}
                  <tr className="shade"><th colSpan="2" className="iconed"><Labelled><WindowIcon />Okno ukazatele 1</Labelled></th></tr>
                  <tr><th className="iconed"><Labelled $gap={3}><FunctionIcon />Stoch(5,3,3)</Labelled></th><td>40.7967</td></tr>
                  <tr className="shade"><th className="iconed"><Labelled $gap={3}><FunctionIcon />Signal</Labelled></th><td>36.7635</td></tr>
                </tbody>
              </DataTable>
            </DataList>
          </DataWindow>

          <ChartColumn>
            <ChartArea>
              <Pane><PricePlot /></Pane>
              <AxisCell><PriceAxis /></AxisCell>
              <Pane><StochPlot /></Pane>
              <AxisCell><StochAxis /></AxisCell>
              <AxisCell $span><TimeAxis /></AxisCell>
            </ChartArea>
            <ChartTabs>
              <TabStrip>
                {CHARTS.map((c, i) => (
                  <Tab key={c} $w={c === 'EURJPY' || c === 'USDJPY' ? 76 : 80} $line={i < 11} $active={c === 'EURCHF'}>{c},H4</Tab>
                ))}
                <Tab>GBP</Tab>
              </TabStrip>
              <TabScroll>
                <button aria-label="Scroll tabs left"><Svg w={5} h={8}><path d="M4 0v8L0 4z" fill={SHADOW} /></Svg></button>
                <button aria-label="Scroll tabs right"><Svg w={5} h={8}><path d="M0 0v8l4-4z" fill="black" /></Svg></button>
              </TabScroll>
            </ChartTabs>
          </ChartColumn>
        </Main>

        <Terminal>
          <SideStrip>
            <CloseButton aria-label="Close terminal"><CrossMark /></CloseButton>
            <h2>Terminál</h2>
          </SideStrip>
          <TerminalBody>
            <ListRow>
              <TableClip>
                <OrderTable>
                  <colgroup>{COLUMNS.map(([, w], i) => <col key={i} width={w} />)}</colgroup>
                  <thead><tr>{COLUMNS.map(([c], i) => (
                    <th key={i} className={c.endsWith('...') ? 'clipped' : ''}>{c}{i === 8 && <>&nbsp;&nbsp;&nbsp;<SortMark /></>}</th>
                  ))}</tr></thead>
                  <tbody>
                    {ORDERS.map((o, r) => (
                      <tr key={o[0]} className={r ? '' : 'shade'}>
                        {o.map((v, i) => (
                          <td key={i} className={i === 6 ? 'stop' : ''}>{i ? v : <Labelled $gap={6}><OrderIcon />{v}</Labelled>}</td>
                        ))}
                      </tr>
                    ))}
                    <tr className="total">
                      <td colSpan="11"><Labelled $gap={6}><Svg w={15} h={16}><circle cx="7" cy="9" r="3" fill="rgb(120, 120, 120)" /></Svg>Zisk/Ztráta: 4 949.47 Kredit: 0.00 Vklad: 5 000.00 Výběr: 0.00</Labelled></td>
                      <td>9 949.47</td>
                    </tr>
                  </tbody>
                </OrderTable>
              </TableClip>
              <ScrollBar>
                <ScrollButton aria-label="Scroll up"><Chevron /></ScrollButton>
                <ScrollButton aria-label="Scroll position" $thumb $push />
                <ScrollButton aria-label="Scroll down"><Chevron down /></ScrollButton>
              </ScrollBar>
            </ListRow>
            <TabStrip>
              {TERMINAL_TABS.map((t, i) => <Tab key={t} $active={i === 1} $line={i > 1}>{t}</Tab>)}
            </TabStrip>
          </TerminalBody>
        </Terminal>

        <StatusBar>
          <StatusCell $first>Pro pomoc, stiskněte F1</StatusCell>
          {STATUS.map((s) => <StatusCell key={s}>{s}</StatusCell>)}
          <StatusCell><ConnectionIcon />13/0 kb<SizeGrip /></StatusCell>
        </StatusBar>
      </Client>
    </Window>
  </>
);

export default App;
